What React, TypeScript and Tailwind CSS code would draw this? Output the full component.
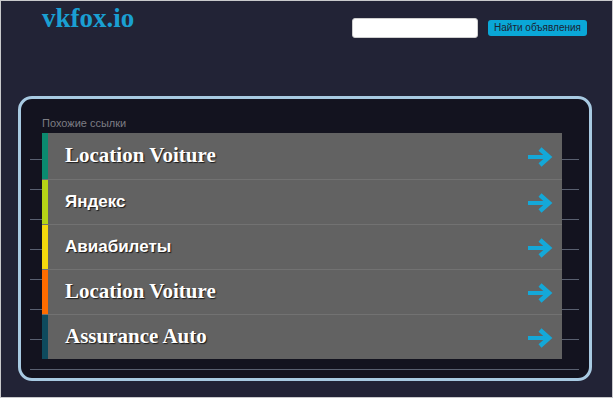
import React from 'react'

const links = [
  { title: 'Location Voiture', color: 'bg-[#0b8a6f]', serif: true },
  { title: 'Яндекс', color: 'bg-[#b5d416]', serif: false },
  { title: 'Авиабилеты', color: 'bg-[#f4d90c]', serif: false },
  { title: 'Location Voiture', color: 'bg-[#ff6c00]', serif: true },
  { title: 'Assurance Auto', color: 'bg-[#0e4a5d]', serif: true },
]

function Arrow() {
  return (
    <svg width="26" height="20" viewBox="0 0 26 20" className="shrink-0 mt-[2px]">
      <path d="M1 10 H21" stroke="#14a8d8" strokeWidth="4" fill="none" />
      <path d="M13 2 L22 10 L13 18" stroke="#14a8d8" strokeWidth="4.5" fill="none" strokeLinejoin="miter" />
    </svg>
  )
}

export default function App() {
  return (
    <div className="w-[613px] h-[398px] border border-[#c9c9cc] bg-[#222336] flex flex-col overflow-hidden">
      {/* шапка */}
      <header className="flex items-start h-[95px] pl-[41px] pr-[25px]">
        <h1
          className="mt-[2px] text-[27px] font-bold text-[#1a9fd2] leading-[30px]"
          style={{ fontFamily: '"Liberation Serif", serif' }}
        >
          vkfox.io
        </h1>
        <div className="ml-auto mt-[17px] flex items-center gap-[10px]">
          <input className="w-[126px] h-[20px] bg-white rounded-[3px] border border-[#cfcfcf] outline-none" />
          <button
            className="h-[16px] px-[6px] rounded-[3px] bg-[#0aa7d7] text-[#1c2333] text-[10px] leading-[16px]"
            style={{ fontFamily: '"Liberation Sans", Arial, sans-serif' }}
          >
            Найти объявления
          </button>
        </div>
      </header>

      {/* панель */}
      <div className="ml-[17px] w-[574px] h-[285px] border-[3px] border-[#a8cae2] rounded-[14px] bg-[#13131f] relative">
        {/* линии фона */}
        <div className="absolute left-[9px] right-[10px] top-[60px] flex flex-col">
          {Array.from({ length: 8 }).map((_, i) => (
            <div key={i} className="h-[30px] border-t border-[#596070]" />
          ))}
        </div>

        <div className="relative pl-[21px] pt-[17px]">
          <p
            className="text-[11px] leading-[14px] text-[#7d7d84]"
            style={{ fontFamily: '"Liberation Sans", Arial, sans-serif' }}
          >
            Похожие ссылки
          </p>
          <ul className="mt-[3px] w-[520px] flex flex-col">
            {links.map((l, i) => (
              <li
                key={i}
                className="h-[45px] flex items-center bg-[#626262] border-t border-[#727272] first:border-t-0 first:h-[46px]"
              >
                <span className={`w-[6px] self-stretch ${l.color}`} />
                <span
                  className={
                    l.serif
                      ? 'ml-[17px] text-white font-bold text-[21px] [text-shadow:1px_1px_1px_#1a1a1a]'
                      : 'ml-[17px] text-white font-bold text-[17px] [text-shadow:1px_1px_1px_#1a1a1a]'
                  }
                  style={{
                    fontFamily: l.serif
                      ? '"Liberation Serif", serif'
                      : '"Liberation Sans", Arial, sans-serif',
                  }}
                >
                  {l.title}
                </span>
                <span className="ml-auto mr-[9px]">
                  <Arrow />
                </span>
              </li>
            ))}
          </ul>
        </div>
      </div>
    </div>
  )
}
